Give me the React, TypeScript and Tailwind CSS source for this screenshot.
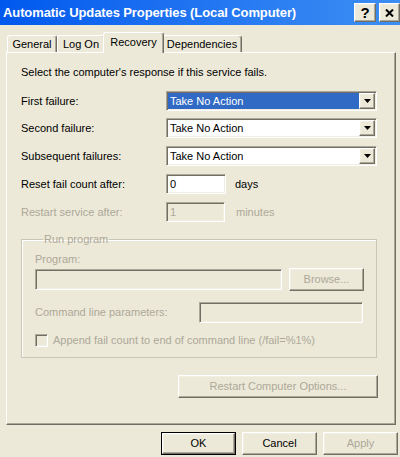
import React from "react";

// classic 3D edges
const raised =
  "border border-t-white border-l-white border-r-[#716F64] border-b-[#716F64] shadow-[inset_-1px_-1px_0_#ACA899,inset_1px_1px_0_#F1EFE2]";
const sunken =
  "border border-t-[#ACA899] border-l-[#ACA899] border-r-white border-b-white shadow-[inset_1px_1px_0_#716F64,inset_-1px_-1px_0_#F1EFE2]";

function DropButton() {
  return (
    <div className={`flex w-[16px] items-center justify-center bg-[#ECE9D8] ${raised}`}>
      <svg width="7" height="4" viewBox="0 0 7 4">
        <path d="M0 0h7L3.5 4z" fill="#000" />
      </svg>
    </div>
  );
}

function Combo({ selected }: { selected?: boolean }) {
  return (
    <div className={`flex h-[20px] w-[211px] bg-white p-px ${sunken}`}>
      <div
        className={`flex flex-1 items-center pl-[2px] ${
          selected ? "bg-[#316AC5] text-white" : "text-black"
        }`}
      >
        Take No Action
      </div>
      <DropButton />
    </div>
  );
}

function Button({
  label,
  width,
  disabled,
  isDefault,
}: {
  label: string;
  width: string;
  disabled?: boolean;
  isDefault?: boolean;
}) {
  const inner = (
    <div
      className={`flex h-full w-full items-center justify-center bg-[#ECE9D8] ${raised} ${
        disabled ? "text-[#ACA899]" : "text-black"
      }`}
    >
      {label}
    </div>
  );
  if (isDefault) {
    return <div className={`h-[23px] ${width} border border-black`}>{inner}</div>;
  }
  return <div className={`h-[23px] ${width}`}>{inner}</div>;
}

function Tab({ label, width, active }: { label: string; width: string; active?: boolean }) {
  return (
    <div
      className={`flex items-center justify-center rounded-t-[3px] border border-b-0 border-t-white border-l-white border-r-[#716F64] bg-[#ECE9D8] shadow-[inset_-1px_0_0_#ACA899] ${width} ${
        active ? "relative z-10 -mx-[2px] -mb-px h-[21px] pb-[2px]" : "h-[17px]"
      }`}
    >
      {label}
    </div>
  );
}

export default function App() {
  return (
    <div className="h-[457px] w-[400px] overflow-hidden bg-[#ECE9D8] font-['Liberation_Sans',Arial,sans-serif] text-[11px] leading-[13px] text-black">
      {/* Title bar */}
      <div className="flex h-[25px] items-center justify-between bg-gradient-to-r from-[#0058EE] to-[#3D8EF3]">
        <span className="pl-[3px] text-[13px] font-bold leading-[16px] tracking-[-0.1px] text-white">
          Automatic Updates Properties (Local Computer)
        </span>
        <div className="flex gap-[3px] self-start pt-[3px]">
          <div className={`flex h-[19px] w-[22px] items-center justify-center bg-[#ECE9D8] ${raised}`}>
            <span className="text-[15px] font-bold leading-none">?</span>
          </div>
          <div className={`flex h-[19px] w-[21px] items-center justify-center bg-[#ECE9D8] ${raised}`}>
            <svg width="9" height="8" viewBox="0 0 9 8">
              <path d="M1 0.5l7 7M8 0.5l-7 7" stroke="#000" strokeWidth="2" />
            </svg>
          </div>
        </div>
      </div>

      {/* Tabs */}
      <div className="mt-[8px] flex h-[19px] items-end pl-[7px]">
        <Tab label="General" width="w-[50px]" />
        <Tab label="Log On" width="w-[48px]" />
        <Tab label="Recovery" width="w-[61px]" active />
        <Tab label="Dependencies" width="w-[80px]" />
      </div>

      {/* Tab panel */}
      <div className="ml-[6px] flex h-[373px] w-[390px] flex-col border border-t-white border-l-white border-r-[#716F64] border-b-[#716F64] pl-[14px] pt-[13px] shadow-[inset_-1px_-1px_0_#ACA899]">
        <div>Select the computer's response if this service fails.</div>

        <div className="mt-[12px] flex h-[20px] items-center">
          <span className="w-[145px]">First failure:</span>
          <Combo selected />
        </div>
        <div className="mt-[7px] flex h-[20px] items-center">
          <span className="w-[145px]">Second failure:</span>
          <Combo />
        </div>
        <div className="mt-[8px] flex h-[20px] items-center">
          <span className="w-[145px]">Subsequent failures:</span>
          <Combo />
        </div>
        <div className="mt-[8px] flex h-[20px] items-center">
          <span className="w-[145px]">Reset fail count after:</span>
          <div className={`flex h-[20px] w-[60px] items-center bg-white pl-[3px] ${sunken}`}>0</div>
          <span className="ml-[9px]">days</span>
        </div>
        <div className="mt-[8px] flex h-[20px] items-center text-[#ACA899]">
          <span className="w-[145px]">Restart service after:</span>
          <div className={`flex h-[20px] w-[59px] items-center bg-[#ECE9D8] pl-[3px] ${sunken}`}>1</div>
          <span className="ml-[11px]">minutes</span>
        </div>

        {/* Run program group */}
        <fieldset className="mt-[11px] w-[356px] border border-[#C9C6B6] pb-[10px] pl-[13px] text-[#ACA899] shadow-[inset_1px_1px_0_#fff]">
          <legend className="ml-[8px] px-[1px]">Run program</legend>
          <div className="mt-[7px]">Program:</div>
          <div className="mt-[2px] flex h-[23px] items-center">
            <div className={`h-[21px] w-[247px] bg-[#ECE9D8] ${sunken}`} />
            <div className="ml-[7px]">
              <Button label="Browse..." width="w-[75px]" disabled />
            </div>
          </div>
          <div className="mt-[11px] flex h-[21px] items-center">
            <span className="w-[164px]">Command line parameters:</span>
            <div className={`h-[21px] w-[164px] bg-[#ECE9D8] ${sunken}`} />
          </div>
          <div className="mt-[11px] flex h-[13px] items-center">
            <div className={`h-[13px] w-[13px] bg-[#ECE9D8] ${sunken}`} />
            <span className="ml-[5px]">Append fail count to end of command line (/fail=%1%)</span>
          </div>
        </fieldset>

        <div className="ml-[157px] mt-[17px]">
          <Button label="Restart Computer Options..." width="w-[200px]" disabled />
        </div>
      </div>

      {/* Dialog buttons */}
      <div className="mt-[7px] flex justify-end gap-[6px] pr-[2px]">
        <Button label="OK" width="w-[75px]" isDefault />
        <Button label="Cancel" width="w-[75px]" />
        <Button label="Apply" width="w-[75px]" disabled />
      </div>
    </div>
  );
}
